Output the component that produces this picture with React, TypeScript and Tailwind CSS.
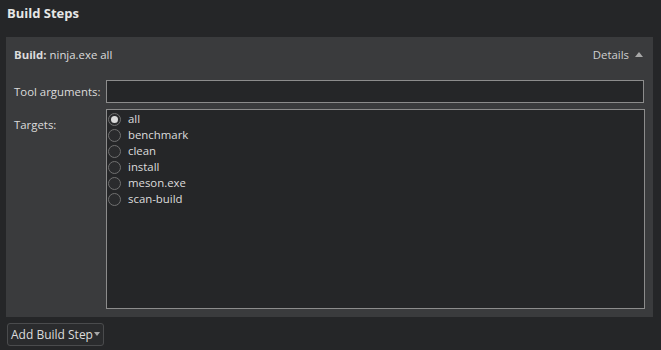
import React, { useState } from "react";

const targets = ["all", "benchmark", "clean", "install", "meson.exe", "scan-build"];

const App: React.FC = () => {
  const [selected, setSelected] = useState("all");

  return (
    <div
      className="w-[661px] h-[350px] bg-[#252628] text-[#dcdcdc] text-[11.4px] flex flex-col overflow-hidden"
      style={{ fontFamily: '"Open Sans", "Noto Sans", sans-serif' }}
    >
      {/* Title */}
      <div className="h-[37px] pl-[7px] pt-[4px] font-bold text-[13px] text-[#e6e6e6]">Build Steps</div>

      {/* Step panel */}
      <div className="ml-[6px] w-[647px] h-[280px] bg-[#3a3b3d] flex flex-col">
        <div className="h-[36px] flex items-center justify-between pl-[8px] pr-[10px]">
          <div>
            <span className="font-bold">Build:</span> ninja.exe all
          </div>
          <div className="flex items-center gap-[6px] text-[#cfcfcf]">
            Details
            <svg width="8" height="5" viewBox="0 0 8 5">
              <path d="M0 5 L4 0 L8 5 Z" fill="#a8a8a8" />
            </svg>
          </div>
        </div>

        <div className="flex items-center h-[23px] mt-[7px]">
          <div className="w-[100px] pl-[8px]">Tool arguments:</div>
          <input className="w-[538px] h-[23px] bg-[#252628] border border-[#8c8c8c] outline-none px-1" />
        </div>

        <div className="flex mt-[6px]">
          <div className="w-[100px] pl-[8px] pt-[7px]">Targets:</div>
          <div className="w-[539px] h-[200px] bg-[#252628] border border-[#8c8c8c] flex flex-col pt-[1px]">
            {targets.map((t) => (
              <div
                key={t}
                className="h-[16px] flex items-center cursor-default"
                onClick={() => setSelected(t)}
              >
                <span className="w-[13px] h-[13px] rounded-full border border-[#707070] bg-[#2a2b2d] flex items-center justify-center ml-[1px]">
                  {selected === t && <span className="w-[7px] h-[7px] rounded-full bg-[#dadada]" />}
                </span>
                <span className="ml-[7px]">{t}</span>
              </div>
            ))}
          </div>
        </div>
      </div>

      {/* Add button */}
      <div className="pl-[7px] pt-[6px]">
        <button className="h-[23px] px-[3px] border border-[#4a4b4d] rounded-[3px] bg-[#2a2b2d] flex items-center text-[#dcdcdc] text-[12px]">
          Add Build Step
          <svg width="6" height="4" viewBox="0 0 6 4" className="ml-[1px] mb-[2px]">
            <path d="M0 0 L6 0 L3 4 Z" fill="#a8a8a8" />
          </svg>
        </button>
      </div>
    </div>
  );
};

export default App;
